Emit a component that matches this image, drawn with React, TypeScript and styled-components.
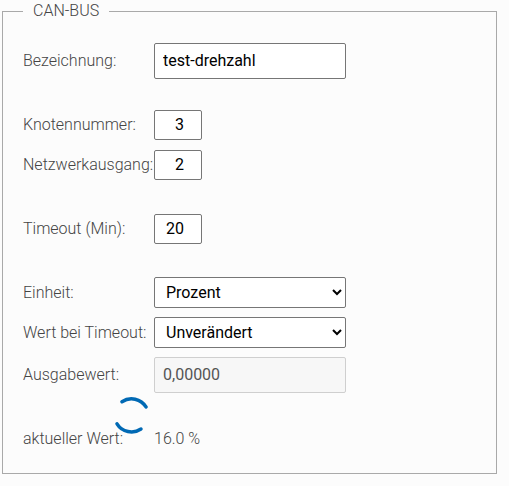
import React, { useState } from "react";
import styled, { createGlobalStyle, css } from "styled-components";

const GlobalStyle = createGlobalStyle`
  *, *::before, *::after { box-sizing: border-box; }
  body {
    margin: 0;
    background: #fcfcfc;
    color: #444;
    font: 300 16px/21px Roboto, "Liberation Sans", sans-serif;
  }
`;

const Page = styled.form`
  padding: 0 12px 12px 2px;
`;

const Panel = styled.fieldset`
  margin: 0;
  min-width: 0;
  padding: 18px 20px 16px;
  border: 1px solid #a9a9a9;
`;

const Legend = styled.legend`
  padding: 0 10px 2px;
`;

const Groups = styled.div`
  display: flex;
  flex-direction: column;
  gap: 24px;
`;

const Row = styled.div<{ $lowered?: boolean }>`
  position: relative;
  display: grid;
  grid-template-columns: 131px minmax(0, 192px);
  align-items: center;
  min-height: 40px;
  padding-top: ${(p) => (p.$lowered ? 4 : 0)}px;
`;

const Label = styled.label`
  padding-bottom: 2px;
  white-space: nowrap;
`;

const control = css`
  width: 100%;
  margin: 0;
  border: 1px solid #767676;
  border-radius: 2px;
  background: #fff;
  color: #000;
  font: 400 16px/20px Roboto, "Liberation Sans", sans-serif;
`;

const TextInput = styled.input`
  ${control}
  height: 36px;
  padding: 0 8px 2px;

  &:disabled {
    border-color: #cfcfcf;
    background: #f7f7f7;
    color: #545454;
  }
`;

const NumberInput = styled.input`
  ${control}
  width: 48px;
  height: 30px;
  padding: 0 17px 2px 4px;
  text-align: right;
`;

const Select = styled.select`
  ${control}
  height: 31px;
  margin-bottom: 1px;
  padding: 0 7px;
`;

const Output = styled.output`
  padding-bottom: 2px;
`;

const SpinnerIcon = styled.svg`
  position: absolute;
  left: 89px;
  top: -21px;
  width: 40px;
  height: 40px;
  fill: none;
  stroke: #0069b4;
  stroke-width: 3.5;
  stroke-linecap: round;
`;

function Spinner() {
  return (
    <SpinnerIcon viewBox="0 0 40 40" role="img" aria-label="Wird geladen">
      <path d="M10 5.7A17 17 0 0 1 34 10.9" />
      <path d="M29 33A17 17 0 0 1 5 27.8" />
    </SpinnerIcon>
  );
}

export default function App() {
  const [name, setName] = useState("test-drehzahl");
  const [node, setNode] = useState("3");
  const [output, setOutput] = useState("2");
  const [timeout, setTimeoutValue] = useState("20");

  return (
    <>
      <GlobalStyle />
      <Page>
        <Panel>
          <Legend>CAN-BUS</Legend>
          <Groups>
            <Row>
              <Label htmlFor="name">Bezeichnung:</Label>
              <TextInput id="name" value={name} onChange={(e) => setName(e.target.value)} />
            </Row>
            <div>
              <Row>
                <Label htmlFor="node">Knotennummer:</Label>
                <NumberInput id="node" inputMode="numeric" value={node} onChange={(e) => setNode(e.target.value)} />
              </Row>
              <Row>
                <Label htmlFor="output">Netzwerkausgang:</Label>
                <NumberInput id="output" inputMode="numeric" value={output} onChange={(e) => setOutput(e.target.value)} />
              </Row>
            </div>
            <Row>
              <Label htmlFor="timeout">Timeout (Min):</Label>
              <NumberInput id="timeout" inputMode="numeric" value={timeout} onChange={(e) => setTimeoutValue(e.target.value)} />
            </Row>
            <div>
              <Row>
                <Label htmlFor="unit">Einheit:</Label>
                <Select id="unit" defaultValue="Prozent">
                  <option>Prozent</option>
                </Select>
              </Row>
              <Row>
                <Label htmlFor="fallback">Wert bei Timeout:</Label>
                <Select id="fallback" defaultValue="Unverändert">
                  <option>Unverändert</option>
                </Select>
              </Row>
              <Row $lowered>
                <Label htmlFor="fallback-value">Ausgabewert:</Label>
                <TextInput id="fallback-value" defaultValue="0,00000" disabled />
              </Row>
            </div>
            <Row $lowered>
              <Label htmlFor="current">aktueller Wert:</Label>
              <Output id="current">16.0 %</Output>
              <Spinner />
            </Row>
          </Groups>
        </Panel>
      </Page>
    </>
  );
}
